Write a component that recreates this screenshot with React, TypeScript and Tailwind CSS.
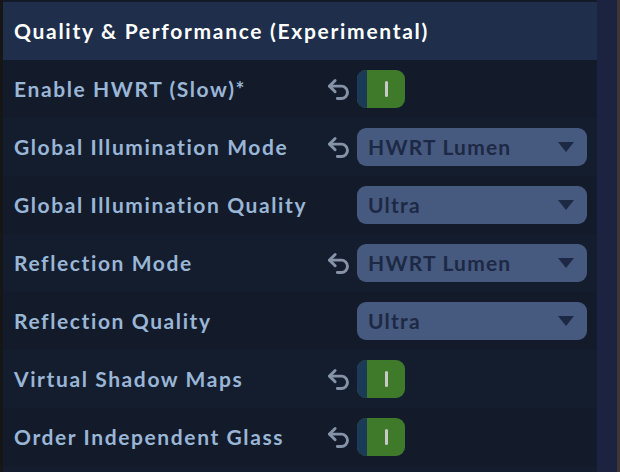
import { Undo2 } from "lucide-react";

type Row =
  | { label: string; kind: "toggle"; reset: boolean }
  | { label: string; kind: "select"; value: string; reset: boolean };

const rows: Row[] = [
  { label: "Enable HWRT (Slow)*", kind: "toggle", reset: true },
  { label: "Global Illumination Mode", kind: "select", value: "HWRT Lumen", reset: true },
  { label: "Global Illumination Quality", kind: "select", value: "Ultra", reset: false },
  { label: "Reflection Mode", kind: "select", value: "HWRT Lumen", reset: true },
  { label: "Reflection Quality", kind: "select", value: "Ultra", reset: false },
  { label: "Virtual Shadow Maps", kind: "toggle", reset: true },
  { label: "Order Independent Glass", kind: "toggle", reset: true },
  { label: "", kind: "toggle", reset: false },
];

const Toggle = () => (
  <div className="flex h-[38px] w-[48px] overflow-hidden rounded-[9px] bg-[#3f7a2b]">
    <div className="w-[10px] bg-[#1b3a58]" />
    <div className="flex flex-1 items-center justify-center">
      <div className="h-[16px] w-[3px] rounded-full bg-[#c9c9c9]" />
    </div>
  </div>
);

const Select = ({ value }: { value: string }) => (
  <div className="flex h-[38px] w-[230px] items-center justify-between rounded-[9px] bg-[#46597f] pl-[11px] pr-[13px]">
    <span className="text-[21px] font-bold tracking-[1.2px] text-[#1d2944]">{value}</span>
    <svg width="16" height="10" viewBox="0 0 16 10">
      <path d="M0 0h16L8 10z" fill="#1d2944" />
    </svg>
  </div>
);

export default function App() {
  return (
    <div
      className="flex h-[472px] w-[620px] overflow-hidden bg-[#161616]"
      style={{ fontFamily: "Lato, 'Noto Sans', sans-serif" }}
    >
      <div className="ml-[3px] flex w-[594px] flex-col bg-[#121a27] pt-[2px]">
        <div className="flex h-[58px] shrink-0 items-center bg-[#1e2e4b] px-[11px]">
          <span className="text-[21px] font-bold tracking-[1.7px] text-white">
            Quality &amp; Performance (Experimental)
          </span>
        </div>
        {rows.map((row, i) => (
          <div
            key={i}
            className={`flex h-[58px] shrink-0 items-center pl-[11px] pr-[10px] ${
              i % 2 === 0 ? "bg-[#131b2b]" : "bg-[#141d2e]"
            }`}
          >
            <span className="flex-1 text-[21px] font-bold tracking-[1.6px] text-[#9ab6d6]">
              {row.label}
            </span>
            {row.label && (
              <>
                <div className="flex w-[18px] items-center justify-center">
                  {row.reset && (
                    <Undo2 size={27} strokeWidth={2.6} className="shrink-0 text-[#8593a8]" />
                  )}
                </div>
                <div className="ml-[10px] flex w-[230px]">
                  {row.kind === "toggle" ? <Toggle /> : <Select value={row.value} />}
                </div>
              </>
            )}
          </div>
        ))}
      </div>
      <div className="w-[20px] bg-[#1b2340]" />
      <div className="w-[3px] bg-[#3b3731]" />
    </div>
  );
}
